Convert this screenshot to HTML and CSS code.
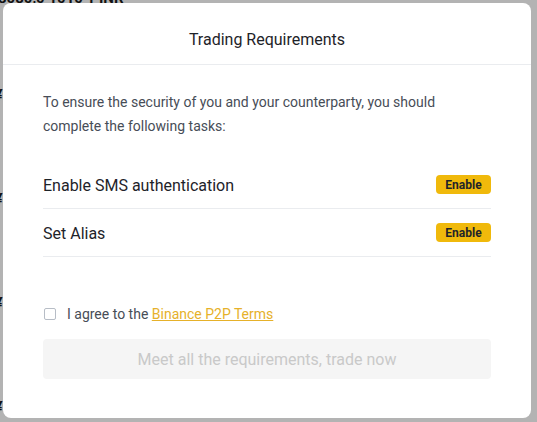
FILE: index.html
```html
<!DOCTYPE html>
<html lang="en">
<head>
<meta charset="utf-8">
<title>Trading Requirements</title>
<link rel="stylesheet" href="styles.css">
</head>
<body>
<div class="page">
  <div class="bg-top">8080,0 1010 1 INR</div>
  <div class="bg-row bg-first"><span class="bg-glyph">¥</span></div>
  <div class="bg-row"><span class="bg-glyph">¥</span></div>
  <div class="bg-row"><span class="bg-glyph">¥</span></div>
  <div class="bg-row"><span class="bg-glyph">¥</span></div>
</div>
<div class="overlay">
  <div class="modal">
    <div class="modal-header">Trading Requirements</div>
    <div class="modal-body">
      <p class="desc">To ensure the security of you and your counterparty, you should complete the following tasks:</p>
      <div class="tasks">
        <div class="task">
          <span class="task-label">Enable SMS authentication</span>
          <button class="enable-btn">Enable</button>
        </div>
        <div class="task">
          <span class="task-label">Set Alias</span>
          <button class="enable-btn">Enable</button>
        </div>
      </div>
      <label class="agree">
        <span class="checkbox"></span>
        <span class="agree-text">I agree to the <a class="terms" href="#">Binance P2P Terms</a></span>
      </label>
      <button class="trade-btn" disabled>Meet all the requirements, trade now</button>
    </div>
  </div>
</div>
</body>
</html>
```

FILE: styles.css
```css
* { box-sizing: border-box; }
html, body { margin: 0; padding: 0; }
html { height: 422px; overflow: hidden; }
body {
  width: 537px;
  height: 422px;
  overflow: hidden;
  background: #b3b3b3;
  font-family: "Roboto", "Noto Sans", sans-serif;
  position: relative;
}
.page {
  height: 422px;
  overflow: hidden;
  display: flex;
  flex-direction: column;
}
.bg-top {
  margin-top: -10px;
  margin-left: -2px;
  font-size: 15px;
  font-weight: 700;
  color: #111;
  line-height: 16px;
  height: 16px;
  flex-shrink: 0;
}
.bg-row {
  height: 104px;
  flex-shrink: 0;
  display: flex;
  align-items: center;
}
.bg-first { margin-top: 37px; }
.bg-glyph {
  margin-left: -6px;
  font-size: 16px;
  font-weight: 700;
  color: #111;
}
.overlay {
  position: absolute;
  left: 3px;
  top: 3px;
}
.modal {
  width: 528px;
  height: 415px;
  background: #fff;
  border-radius: 8px;
  display: flex;
  flex-direction: column;
}
.modal-header {
  padding: 25px 0 12px;
  line-height: 24px;
  font-size: 16px;
  text-align: center;
  color: #1e2329;
  border-bottom: 1px solid #eaecef;
}
.modal-body {
  padding: 25px 40px 0 40px;
  display: flex;
  flex-direction: column;
}
.desc {
  margin: 0;
  font-size: 14px;
  line-height: 24px;
  color: #474d57;
}
.tasks {
  margin-top: 23px;
  display: flex;
  flex-direction: column;
}
.task {
  height: 48px;
  display: flex;
  align-items: center;
  justify-content: space-between;
  border-bottom: 1px solid #eaecef;
}
.task-label {
  font-size: 16px;
  color: #1e2329;
  padding-top: 1px;
}
.enable-btn {
  border: 0;
  background: #f0b90b;
  color: #1e2329;
  font-family: inherit;
  font-size: 12px;
  font-weight: 700;
  width: 55px;
  height: 19px;
  padding: 0;
  border-radius: 4px;
}
.agree {
  margin-top: 45px;
  display: flex;
  align-items: center;
  line-height: 24px;
  font-size: 14px;
  color: #474d57;
}
.checkbox {
  width: 12px;
  height: 12px;
  border: 1px solid #b7bdc6;
  border-radius: 2px;
  margin-left: 1px;
  margin-right: 11px;
}
.terms {
  color: #e6b12a;
  text-decoration: underline;
}
.trade-btn {
  margin-top: 13px;
  height: 40px;
  border: 0;
  border-radius: 4px;
  background: #f5f5f5;
  color: #c9c9c9;
  font-family: inherit;
  font-size: 16px;
}
```
